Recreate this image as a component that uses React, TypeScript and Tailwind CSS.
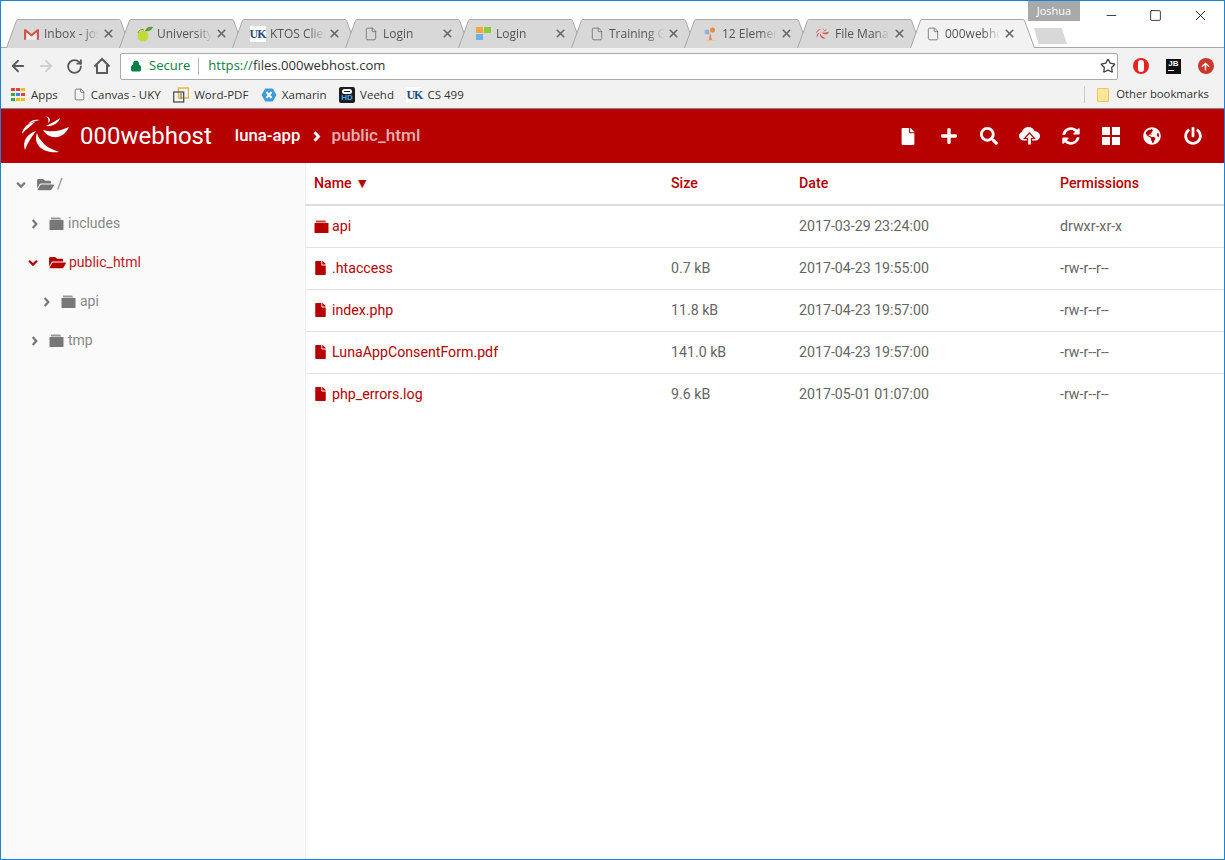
import { ArrowLeft, ArrowRight, RotateCw, Star, X, Minus, Square, File, Lock } from "lucide-react";
import {
  FaFile,
  FaPlus,
  FaSearch,
  FaSyncAlt,
  FaGlobeAmericas,
  FaPowerOff,
  FaFolderOpen,
  FaArrowUp,
} from "react-icons/fa";

const Swirl = ({ className, fill }: { className: string; fill: string }) => (
  <svg viewBox="0 0 60 52" className={className} fill={fill}>
    <path d="M22 23 C18 34 27 44 44 42 C36 39 30 36 27.5 32 C25 29 23 27 22 23 Z" />
    <path d="M28 20 C33 29 48 31 54 17 C47 20 38 23 28 20 Z" />
    <path d="M10 40 C7 31 12 24 21 21 C17 26 13 32 10 40 Z" />
    <path d="M7 24 C8 17 13 13 20 12 C16 16 11 19 7 24 Z" />
    <path d="M13 14 C16 10 20 9 25 10 C20 11 17 12 13 14 Z" />
    <path d="M31 16 C37 17 44 13 45 8 C42 10 37 13 31 16 Z" />
    <path d="M30 6 C33 7 34 10 33 13 C36 11 36 7 30 6 Z" />
  </svg>
);

// boxy folder, the tab runs nearly the whole width like in the old icon font
const Folder = ({ className }: { className: string }) => (
  <svg viewBox="0 0 15 13" className={className} fill="currentColor">
    <path d="M2 0.5 H11 L12.5 2.5 H2 Z" opacity="0.75" />
    <rect x="0.5" y="3" width="14" height="10" rx="0.5" />
  </svg>
);

const ChevronRight = ({ className, width = 2.4 }: { className: string; width?: number }) => (
  <svg viewBox="0 0 8 11" className={className} fill="none" stroke="currentColor" strokeWidth={width}>
    <path d="M2 1.2 L6 5.5 L2 9.8" />
  </svg>
);

const ChevronDown = ({ className }: { className: string }) => (
  <svg viewBox="0 0 11 8" className={className} fill="none" stroke="currentColor" strokeWidth={2.4}>
    <path d="M1.2 1.5 L5.5 5.8 L9.8 1.5" />
  </svg>
);

const UkLogo = () => (
  <span className="flex h-[16px] w-[16px] shrink-0 items-center justify-center bg-white font-['Liberation_Serif',serif] text-[12px] font-bold tracking-[-1px] text-[#1e4a7c]">
    UK
  </span>
);

const PageIcon = () => <File className="h-[16px] w-[14px] shrink-0 text-[#666]" strokeWidth={1.3} />;

const tabs = [
  {
    title: "Inbox - joshua",
    icon: (
      <svg viewBox="0 0 16 12" className="h-[12px] w-[15px] shrink-0">
        <path d="M0 1 H2 L8 6 L14 1 H16 V12 H13.5 V4.5 L8 9 L2.5 4.5 V12 H0 Z" fill="#d9534a" />
        <path d="M2.5 4.5 V12 H13.5 V4.5 L8 9 Z" fill="#eeeeee" />
      </svg>
    ),
  },
  {
    title: "University of",
    icon: (
      <svg viewBox="0 0 16 16" className="h-[16px] w-[16px] shrink-0">
        <ellipse cx="6" cy="10" rx="5.5" ry="5.5" fill="#c4d83a" />
        <path d="M8 5 C9 1 13 0 16 1 C15 4 12 6 8 5 Z" fill="#5f9e2e" />
        <path d="M1 7 C2 4 4 3 7 4" stroke="#5f9e2e" fill="none" />
      </svg>
    ),
  },
  { title: "KTOS Client", icon: <UkLogo /> },
  { title: "Login", icon: <PageIcon /> },
  {
    title: "Login",
    icon: (
      <span className="grid w-[15px] shrink-0 grid-cols-2 gap-px">
        <span className="h-[6px] bg-[#f5a93b]" />
        <span className="h-[6px] bg-[#8fcb3a]" />
        <span className="h-[6px] bg-[#6fb1ef]" />
      </span>
    ),
  },
  { title: "Training Guide", icon: <PageIcon /> },
  {
    title: "12 Elements",
    icon: (
      <svg viewBox="0 0 16 16" className="h-[16px] w-[16px] shrink-0">
        <path d="M2 15 C6 13 10 13 15 15 Z" fill="#f3c49b" />
        <path d="M7 14 L8 6 L10 14 Z" fill="#e78a45" />
        <circle cx="5" cy="6" r="2.5" fill="#8db4d8" />
        <circle cx="10.5" cy="4" r="2.5" fill="#e78a45" />
      </svg>
    ),
  },
  { title: "File Manager", icon: <Swirl className="h-[16px] w-[17px] shrink-0" fill="#d9534f" /> },
  { title: "000webhost", icon: <PageIcon />, active: true },
];

const bookmarks = [
  {
    label: "Canvas - UKY",
    icon: <File className="h-[15px] w-[13px] text-[#555]" strokeWidth={1.3} />,
  },
  {
    label: "Word-PDF",
    icon: (
      <svg viewBox="0 0 16 16" className="h-[16px] w-[16px]" fill="none">
        <rect x="5.5" y="1" width="10" height="10" stroke="#e5b23c" strokeWidth="1.4" />
        <rect x="0.7" y="5" width="10" height="10" stroke="#444" strokeWidth="1.2" />
        <path d="M8 4 V12" stroke="#888" strokeWidth="1.5" />
      </svg>
    ),
  },
  {
    label: "Xamarin",
    icon: (
      <svg viewBox="0 0 16 16" className="h-[16px] w-[16px]">
        <path d="M4.3 1.5 H11.7 L15.5 8 L11.7 14.5 H4.3 L0.5 8 Z" fill="#3c9bdc" />
        <path d="M5.5 5 L10.5 11 M10.5 5 L5.5 11" stroke="#fff" strokeWidth="2" />
      </svg>
    ),
  },
  {
    label: "Veehd",
    icon: (
      <span className="flex h-[16px] w-[16px] flex-col items-center justify-between rounded-[2px] bg-[#1d1d1f] pt-[2px] pb-px">
        <span className="h-[5px] w-[10px] rounded-full border-2 border-white" />
        <span className="font-['Liberation_Sans',sans-serif] text-[8px] leading-[8px] font-bold text-[#49a8f2]">HD</span>
      </span>
    ),
  },
  { label: "CS 499", icon: <UkLogo /> },
];

const toolIcons = [
  <FaFile className="h-[17px] w-[14px]" />,
  <FaPlus className="h-[18px] w-[18px]" />,
  <FaSearch className="h-[18px] w-[18px]" />,
  <svg viewBox="0 0 21 18" className="h-[18px] w-[21px]">
    <path d="M5 13.5 C2 13.5 0 11.5 0 9 C0 7 1.3 5.4 3 5 C3.6 2.2 6.2 0 9.5 0 C12.5 0 14.7 1.8 15.5 4 C18.5 4.2 21 6.3 21 9 C21 11.5 19 13.5 16 13.5 Z" fill="#fff" />
    <path d="M10.5 6 L15.5 11.5 H12.5 V18 H8.5 V11.5 H5.5 Z" fill="#fff" stroke="#b70000" strokeWidth="1.2" />
  </svg>,
  <FaSyncAlt className="h-[18px] w-[18px]" />,
  <svg viewBox="0 0 18 18" className="h-[18px] w-[18px]" fill="#fff">
    <rect width="8" height="8" />
    <rect x="10" width="8" height="8" />
    <rect y="10" width="8" height="8" />
    <rect x="10" y="10" width="8" height="8" />
  </svg>,
  <FaGlobeAmericas className="h-[18px] w-[18px]" />,
  <FaPowerOff className="h-[18px] w-[18px]" />,
];

const tree = [
  { name: "/", level: "pl-[15px]", open: true, root: true },
  { name: "includes", level: "pl-[29px]" },
  { name: "public_html", level: "pl-[27px]", open: true, active: true },
  { name: "api", level: "pl-[41px]" },
  { name: "tmp", level: "pl-[29px]" },
];

const files = [
  { name: "api", size: "", date: "2017-03-29 23:24:00", perm: "drwxr-xr-x", dir: true },
  { name: ".htaccess", size: "0.7 kB", date: "2017-04-23 19:55:00", perm: "-rw-r--r--" },
  { name: "index.php", size: "11.8 kB", date: "2017-04-23 19:57:00", perm: "-rw-r--r--" },
  { name: "LunaAppConsentForm.pdf", size: "141.0 kB", date: "2017-04-23 19:57:00", perm: "-rw-r--r--" },
  { name: "php_errors.log", size: "9.6 kB", date: "2017-05-01 01:07:00", perm: "-rw-r--r--" },
];

const Tab = ({ title, icon, active }: { title: string; icon: React.ReactNode; active?: boolean }) => (
  <div className={`relative -mr-[12px] flex h-[29px] w-[125px] shrink-0 items-center ${active ? "z-10 pl-[14px]" : "pl-[17px]"}`}>
    {/* tab outline sits behind the title */}
    <svg viewBox="0 0 125 29" className="absolute inset-0 h-full w-full">
      <path
        d="M0.5 29 L10.5 1.5 Q11 0.5 12 0.5 H113 Q114 0.5 114.5 1.5 L124.5 29"
        fill={active ? "#f2f2f2" : "#d8d8d8"}
        stroke="#a8a8a8"
      />
    </svg>
    <span className="relative flex w-[17px] shrink-0 justify-center">{icon}</span>
    <span className="relative ml-[4px] w-[55px] overflow-hidden text-[12px] whitespace-nowrap text-[#555] [mask-image:linear-gradient(to_right,black_70%,transparent)]">
      {title}
    </span>
    <X className="relative ml-[3px] h-[13px] w-[13px] shrink-0 text-[#666]" strokeWidth={3} />
  </div>
);

const App = () => {
  return (
    <div className="flex h-[860px] w-[1225px] flex-col overflow-hidden border border-[#1883d7] bg-white font-['Open_Sans',sans-serif]">
      {/* window title + tab strip */}
      <div className="relative flex h-[47px] shrink-0 items-end border-b border-[#a8a8a8] pl-[5px]">
        <div className="-mb-px flex">
          {tabs.map((tab, i) => (
            <Tab key={i} title={tab.title} icon={tab.icon} active={tab.active} />
          ))}
        </div>
        <div className="mb-[3px] ml-[11px] h-[16px] w-[33px] bg-[#d8d8d8] [clip-path:polygon(0_0,84%_0,100%_100%,14%_100%)]" />
        <div className="absolute top-0 right-0 flex items-start">
          <div className="flex h-[20px] w-[52px] items-center justify-center bg-[#a9a9a9] text-[11px] text-white">Joshua</div>
          <div className="flex h-[28px] w-[144px] items-center text-black">
            <Minus className="ml-[24px] h-[15px] w-[15px]" strokeWidth={1.2} />
            <Square className="ml-[30px] h-[13px] w-[13px]" strokeWidth={1.4} absoluteStrokeWidth />
            <X className="ml-[30px] h-[17px] w-[17px]" strokeWidth={1.2} />
          </div>
        </div>
      </div>

      {/* address bar */}
      <div className="flex h-[33px] shrink-0 items-center bg-[#f2f2f2] pt-[3px] pl-[8px]">
        <ArrowLeft className="h-[18px] w-[18px] text-[#5a5a5a]" strokeWidth={2.4} />
        <ArrowRight className="ml-[10px] h-[18px] w-[18px] text-[#d0d0d0]" strokeWidth={2.4} />
        <RotateCw className="ml-[11px] h-[17px] w-[17px] text-[#5a5a5a]" strokeWidth={2.6} />
        <svg viewBox="0 0 18 18" className="ml-[10px] h-[18px] w-[18px]" fill="none" stroke="#5a5a5a" strokeWidth="2">
          <path d="M1.5 9.5 L9 2 L16.5 9.5 M4 8 V16 H14 V8" />
        </svg>
        <div className="ml-[9px] flex h-[27px] w-[998px] items-center rounded-[2px] border border-[#aaaaaa] bg-white pr-px pl-[9px] text-[13px]">
          <Lock className="h-[12px] w-[12px] text-[#0b8043]" fill="#0b8043" strokeWidth={2} />
          <span className="ml-[7px] text-[#0b8043]">Secure</span>
          <span className="mr-[9px] ml-[8px] h-[17px] w-px bg-[#b5b5b5]" />
          <span className="text-[13.1px] text-[#0b8043]">https://</span>
          <span className="text-[13.1px] text-[#333]">files.000webhost.com</span>
          <Star className="ml-auto h-[16px] w-[16px] text-[#444]" strokeWidth={2} />
        </div>
        <div className="flex flex-1 items-center justify-around pr-[2px] pl-[7px]">
          <span className="flex h-[16px] w-[16px] items-center justify-center rounded-full bg-[#e8231f]">
            <span className="h-[12px] w-[6px] rounded-full bg-white" />
          </span>
          <span className="flex h-[15px] w-[15px] flex-col items-center bg-[#111] font-['Liberation_Sans',sans-serif] text-[8px] leading-[10px] font-bold text-white">
            JB
            <span className="mt-px mr-[4px] h-px w-[6px] bg-white" />
          </span>
          <span className="flex h-[16px] w-[16px] items-center justify-center rounded-full bg-[#c9392b]">
            <FaArrowUp className="h-[9px] w-[9px] text-white" />
          </span>
        </div>
      </div>

      {/* bookmarks bar */}
      <div className="flex h-[28px] shrink-0 items-center border-b border-[#888] bg-[#f2f2f2] pl-[10px] text-[11.5px] text-[#333]">
        <span className="grid h-[13px] w-[14px] grid-cols-3 gap-[1.5px]">
          {["#e34234", "#e34234", "#fbbc05", "#34a853", "#4285f4", "#e34234", "#34a853", "#fbbc05", "#fbbc05"].map((c, i) => (
            <span key={i} style={{ backgroundColor: c }} />
          ))}
        </span>
        <span className="mr-[15px] ml-[6px]">Apps</span>
        {bookmarks.map((b) => (
          <div key={b.label} className="mr-[12.5px] flex items-center gap-[5px]">
            {b.icon}
            <span>{b.label}</span>
          </div>
        ))}
        <div className="mr-[15px] ml-auto flex items-center">
          <span className="mr-[12px] h-[17px] w-px bg-[#ccc]" />
          <span className="mr-[7px] h-[14px] w-[12px] rounded-[1px] border border-[#e8c95b] bg-[#fde699]" />
          <span className="text-[11.3px]">Other bookmarks</span>
        </div>
      </div>

      {/* app header */}
      <header className="flex h-[54px] shrink-0 items-center bg-[#b70000] font-['Roboto',sans-serif] text-white shadow-[0_1px_2px_rgba(0,0,0,0.2)]">
        <Swirl className="ml-[14px] h-[52px] w-[60px]" fill="#ffffff" />
        <span className="ml-[5px] text-[24px]">000webhost</span>
        <span className="ml-[23px] text-[16.8px] font-medium">luna-app</span>
        <ChevronRight className="mr-[10px] ml-[12px] h-[11px] w-[9px]" width={2.8} />
        <span className="text-[17.2px] font-medium text-white/70">public_html</span>
        <div className="mr-[11px] ml-auto flex items-center">
          {toolIcons.map((icon, i) => (
            <span key={i} className="flex w-[40.7px] justify-center">
              {icon}
            </span>
          ))}
        </div>
      </header>

      <div className="flex flex-1 font-['Roboto',sans-serif] text-[14px]">
        {/* folder tree */}
        <aside className="w-[305px] border-r border-[#eeeeee] bg-[#fafafa] pt-[2px]">
          {tree.map((n) => (
            <div
              key={n.name}
              className={`flex h-[39px] items-center ${n.level} ${n.active ? "text-[#c01818]" : "text-[#888]"}`}
            >
              {n.open ? (
                <ChevronDown className={`h-[8px] w-[10px] ${n.active ? "text-[#b70000]" : "text-[#777]"}`} />
              ) : (
                <ChevronRight className="h-[10px] w-[9px] text-[#777]" />
              )}
              {n.open ? (
                <FaFolderOpen className={`ml-[11px] h-[15px] w-[17px] ${n.active ? "text-[#b70000]" : "text-[#777]"}`} />
              ) : (
                <Folder className="ml-[10px] h-[13px] w-[15px] text-[#777]" />
              )}
              <span className={n.open ? "ml-[3px]" : "ml-[4px]"}>{n.name}</span>
            </div>
          ))}
        </aside>

        {/* file list */}
        <main className="flex-1 bg-white text-[14.2px]">
          <div className="grid h-[43px] grid-cols-[357px_128px_261px_1fr] items-center border-b-2 border-[#dddddd] pl-[8px] font-medium text-[#b70000]">
            <span>Name ▼</span>
            <span>Size</span>
            <span>Date</span>
            <span>Permissions</span>
          </div>
          {files.map((f, i) => (
            <div
              key={f.name}
              className={`grid h-[42px] grid-cols-[357px_128px_261px_1fr] items-center border-b pl-[8px] text-[#666] ${i < files.length - 1 ? "border-[#e2e2e2]" : "border-transparent"}`}
            >
              <span className="flex items-center text-[#b70000]">
                <span className="flex w-[18px] justify-start">
                  {f.dir ? (
                    <Folder className="h-[13px] w-[15px]" />
                  ) : (
                    <FaFile className="ml-px h-[14px] w-[11px]" />
                  )}
                </span>
                {f.name}
              </span>
              <span>{f.size}</span>
              <span>{f.date}</span>
              <span>{f.perm}</span>
            </div>
          ))}
        </main>
      </div>
    </div>
  );
};

export default App;
